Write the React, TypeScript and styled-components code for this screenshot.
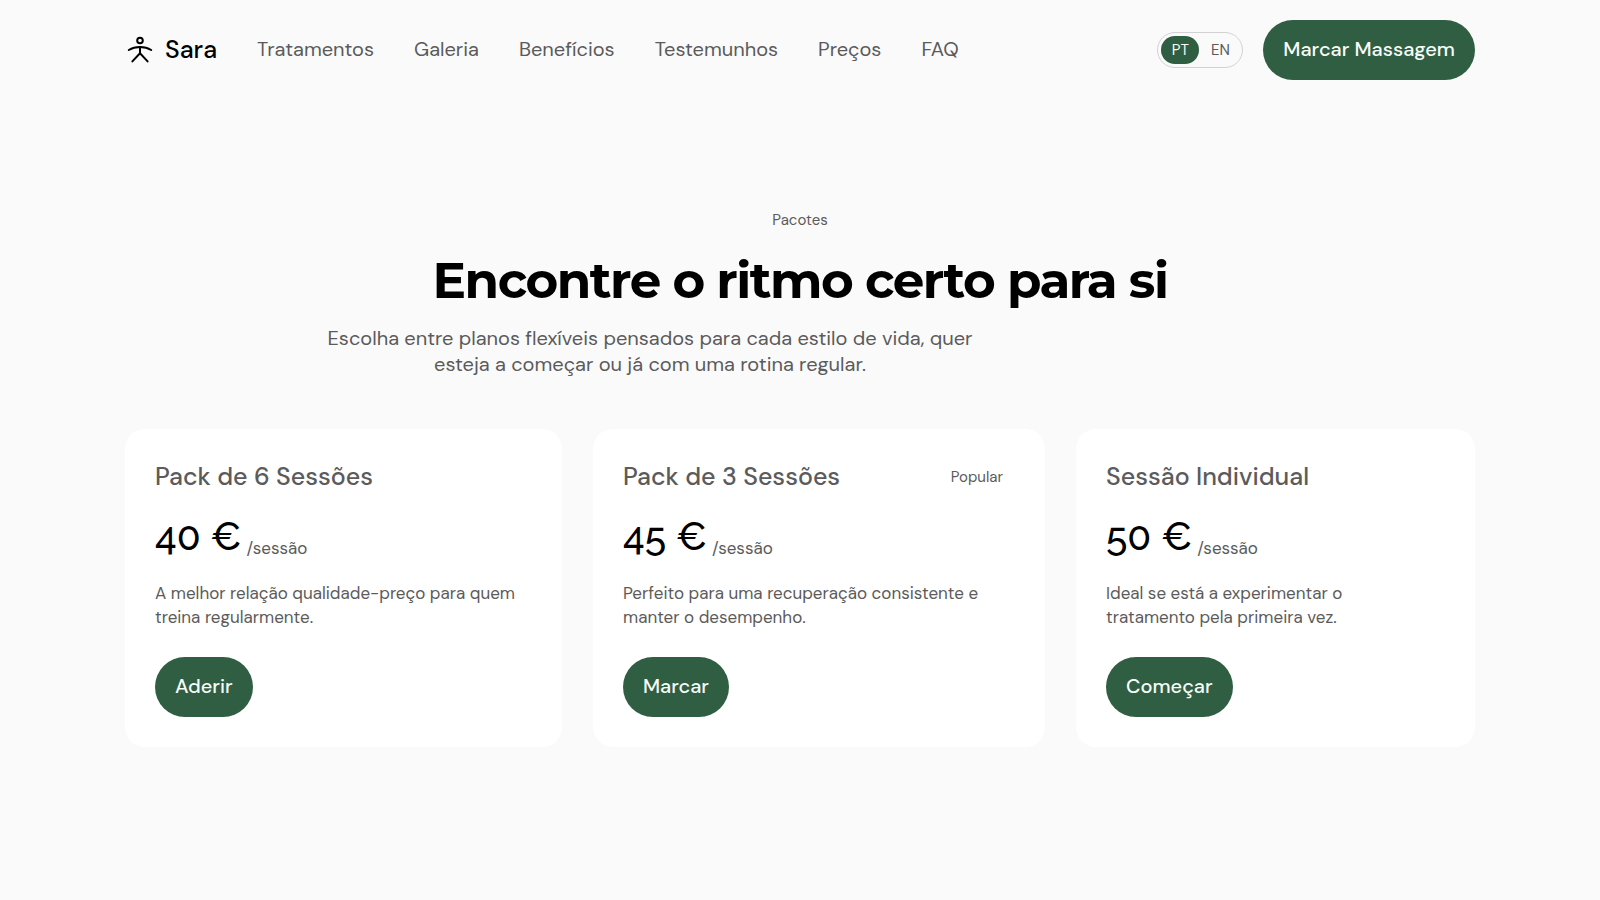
import React, { useState } from "react";
import styled, { createGlobalStyle } from "styled-components";

const green = "#2f5e42";
const ink = "#000000";
const muted = "#5b5b5b";

const GlobalStyle = createGlobalStyle`
  *, *::before, *::after { box-sizing: border-box; }
  body {
    margin: 0;
    background: #fafafa;
    color: ${muted};
    font-family: "DM Sans", Inter, "Liberation Sans", sans-serif;
    font-size: 20px;
  }
  h1, h2, h3, p, ul { margin: 0; padding: 0; }
  button { font: inherit; cursor: pointer; }
`;

const Container = styled.div`
  width: 100%;
  max-width: 1400px;
  margin: 0 auto;
  padding: 0 25px;
`;

const HeaderBar = styled(Container).attrs({ as: "header" })`
  display: flex;
  align-items: center;
  padding-top: 20px;
  padding-bottom: 20px;
`;

const Logo = styled.a`
  display: flex;
  align-items: center;
  gap: 10px;
  margin-right: 40px;
  color: ${ink};
  font-size: 25px;
  font-weight: 500;
  line-height: 32px;
  text-decoration: none;
`;

const NavList = styled.ul`
  display: flex;
  gap: 40px;
  padding-bottom: 2px;
  list-style: none;
`;

const NavLink = styled.a`
  display: block;
  color: ${muted};
  line-height: 26px;
  text-decoration: none;
`;

const Actions = styled.div`
  display: flex;
  align-items: center;
  gap: 20px;
  margin-left: auto;
`;

const LanguageSwitch = styled.div`
  display: flex;
  gap: 2px;
  padding: 3px;
  border: 1px solid #d2d2d2;
  border-radius: 18px;
`;

const LanguageButton = styled.button<{ $active: boolean }>`
  min-width: 38px;
  height: 28px;
  padding: 0 9px;
  border: 0;
  border-radius: 14px;
  background: ${(p) => (p.$active ? green : "transparent")};
  color: ${(p) => (p.$active ? "#f4faf5" : muted)};
  font-size: 15px;
  line-height: 28px;
`;

const PillButton = styled.button`
  align-self: flex-start;
  height: 60px;
  padding: 0 20px 2px;
  border: 0;
  border-radius: 30px;
  background: ${green};
  color: #f7fcf8;
  font-weight: 500;
  white-space: nowrap;
`;

const Packages = styled(Container).attrs({ as: "main" })`
  padding-top: 110px;
  padding-bottom: 110px;
`;

const Intro = styled.div`
  max-width: 1000px;
  margin: 0 auto 52px;
  text-align: center;
`;

const Eyebrow = styled.p`
  font-size: 15px;
  line-height: 20px;
`;

const Heading = styled.h1`
  margin: 20px 0 13px;
  color: ${ink};
  font-family: Montserrat, Inter, "Liberation Sans", sans-serif;
  font-size: 50px;
  font-weight: 700;
  letter-spacing: -0.03em;
  line-height: 62px;
`;

const Lead = styled.p`
  max-width: 700px;
  line-height: 26px;
`;

const CardGrid = styled.div`
  display: grid;
  grid-template-columns: 437fr 452fr 399fr;
  gap: 31px;
`;

const Card = styled.article`
  display: flex;
  flex-direction: column;
  padding: 30px;
  border-radius: 20px;
  background: #ffffff;
`;

const CardHeader = styled.div`
  display: flex;
  align-items: center;
  justify-content: space-between;
`;

const CardTitle = styled.h2`
  font-size: 25px;
  font-weight: 500;
  line-height: 36px;
`;

const Badge = styled.span`
  padding: 0 12px;
  font-size: 15px;
  line-height: 20px;
`;

const PriceRow = styled.p`
  display: flex;
  align-items: flex-end;
  gap: 5px;
  margin: 18px 0 21px;
`;

const Price = styled.span`
  color: ${ink};
  font-family: Raleway, Lato, "Liberation Sans", sans-serif;
  font-size: 39px;
  font-weight: 500;
  font-variant-numeric: oldstyle-nums;
  line-height: 47px;
`;

const Unit = styled.span`
  font-size: 17px;
  line-height: 24px;
`;

const Description = styled.p`
  margin-bottom: 28px;
  padding-right: 12px;
  font-size: 17px;
  line-height: 24px;
`;

const links = [
  ["Tratamentos", "#tratamentos"],
  ["Galeria", "#galeria"],
  ["Benefícios", "#beneficios"],
  ["Testemunhos", "#testemunhos"],
  ["Preços", "#precos"],
  ["FAQ", "#faq"],
];

const packs = [
  {
    title: "Pack de 6 Sessões",
    price: "40 €",
    text: "A melhor relação qualidade-preço para quem treina regularmente.",
    action: "Aderir",
    badge: "",
  },
  {
    title: "Pack de 3 Sessões",
    price: "45 €",
    text: "Perfeito para uma recuperação consistente e manter o desempenho.",
    action: "Marcar",
    badge: "Popular",
  },
  {
    title: "Sessão Individual",
    price: "50 €",
    text: "Ideal se está a experimentar o tratamento pela primeira vez.",
    action: "Começar",
    badge: "",
  },
];

function PersonIcon() {
  return (
    <svg
      width="30"
      height="30"
      viewBox="0 0 30 30"
      fill="none"
      stroke="currentColor"
      strokeWidth="2"
      strokeLinecap="round"
      strokeLinejoin="round"
      aria-hidden="true"
    >
      <circle cx="15" cy="5.500" r="2.800" />
      <path d="M3.800 15C7 13 11 12 15 12s8 1 11.200 3" />
      <path d="M15 12v6.200M7.400 26.400L15 18.200l7.600 8.200" />
    </svg>
  );
}

export default function App() {
  const [language, setLanguage] = useState("PT");
  return (
    <>
      <GlobalStyle />
      <HeaderBar>
        <Logo href="#inicio">
          <PersonIcon />
          Sara
        </Logo>
        <nav aria-label="Principal">
          <NavList>
            {links.map(([label, href]) => (
              <li key={href}>
                <NavLink href={href}>{label}</NavLink>
              </li>
            ))}
          </NavList>
        </nav>
        <Actions>
          <LanguageSwitch role="group" aria-label="Idioma">
            {["PT", "EN"].map((code) => (
              <LanguageButton
                key={code}
                type="button"
                $active={language === code}
                aria-pressed={language === code}
                onClick={() => setLanguage(code)}
              >
                {code}
              </LanguageButton>
            ))}
          </LanguageSwitch>
          <PillButton type="button">Marcar Massagem</PillButton>
        </Actions>
      </HeaderBar>
      <Packages>
        <Intro>
          <Eyebrow>Pacotes</Eyebrow>
          <Heading>Encontre o ritmo certo para si</Heading>
          <Lead>
            Escolha entre planos flexíveis pensados para cada estilo de vida, quer esteja a começar
            ou já com uma rotina regular.
          </Lead>
        </Intro>
        <CardGrid>
          {packs.map((pack) => (
            <Card key={pack.title}>
              <CardHeader>
                <CardTitle>{pack.title}</CardTitle>
                {pack.badge && <Badge>{pack.badge}</Badge>}
              </CardHeader>
              <PriceRow>
                <Price>{pack.price}</Price>
                <Unit>/sessão</Unit>
              </PriceRow>
              <Description>{pack.text}</Description>
              <PillButton type="button">{pack.action}</PillButton>
            </Card>
          ))}
        </CardGrid>
      </Packages>
    </>
  );
}
